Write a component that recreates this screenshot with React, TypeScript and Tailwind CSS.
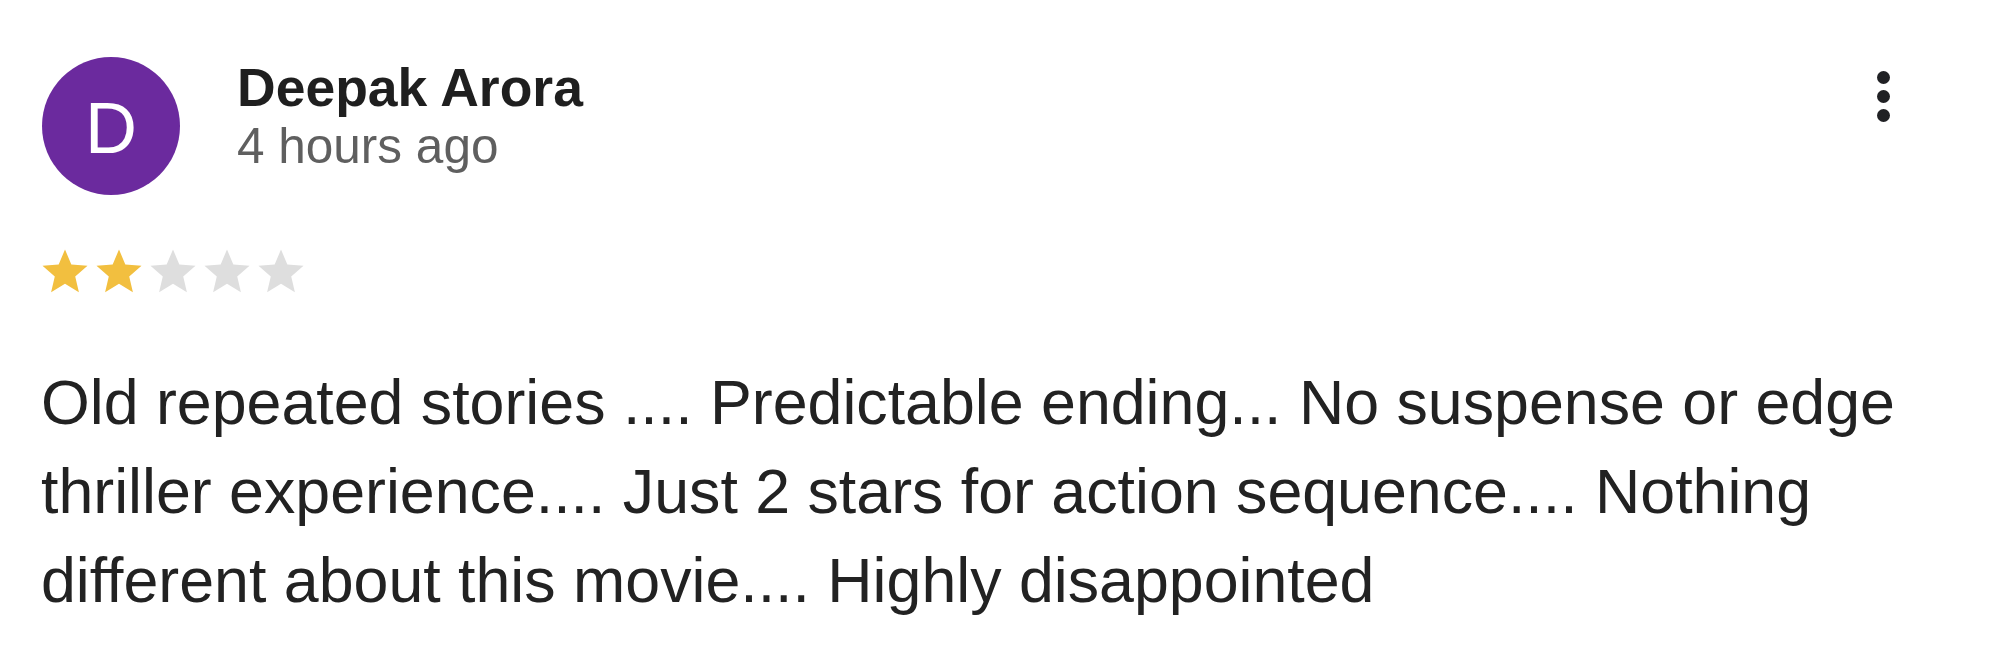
import React from 'react';

/**
 * ReviewCard - single user review, large scale
 */
const Star: React.FC<{ filled: boolean }> = ({ filled }) => (
  <svg className="w-[54px] h-[54px]" viewBox="0 0 24 24" fill={filled ? '#f2bf3f' : '#dedede'}>
    <path d="M12 17.27L18.18 21l-1.64-7.03L22 9.24l-7.19-.61L12 2 9.19 8.63 2 9.24l5.46 4.73L5.82 21z" />
  </svg>
);

const App: React.FC = () => {
  const rating = 2;

  return (
    <div className="w-[2000px] h-[659px] bg-white overflow-hidden font-['Liberation_Sans',Arial,sans-serif]">
      {/* Header */}
      <div className="flex items-start pl-[42px] pt-[57px] pr-[110px]">
        <div className="w-[138px] h-[138px] rounded-full bg-[#6b2a9e] flex items-center justify-center shrink-0">
          <span className="text-white text-[72px] leading-none font-['Liberation_Sans',sans-serif] pt-[4px]">D</span>
        </div>

        <div className="ml-[57px] mt-[1px] flex flex-col">
          <span className="text-[53.5px] leading-[60px] font-bold text-[#1f1f1f]">Deepak Arora</span>
          <span className="text-[49.5px] leading-[56px] text-[#5f5f5f]">4 hours ago</span>
        </div>

        {/* Menu */}
        <button className="ml-auto mt-[14px] flex flex-col gap-[6px] p-0" aria-label="More options">
          <span className="w-[13px] h-[13px] rounded-full bg-[#202124]" />
          <span className="w-[13px] h-[13px] rounded-full bg-[#202124]" />
          <span className="w-[13px] h-[13px] rounded-full bg-[#202124]" />
        </button>
      </div>

      {/* Rating */}
      <div className="flex pl-[38px] mt-[50px]">
        {[1, 2, 3, 4, 5].map((i) => (
          <Star key={i} filled={i <= rating} />
        ))}
      </div>

      {/* Body */}
      <p className="pl-[41px] pr-[40px] mt-[59px] text-[62.7px] leading-[89px] text-[#222222]">
        Old repeated stories .... Predictable ending... No suspense or edge thriller experience.... Just 2 stars for
        action sequence.... Nothing different about this movie.... Highly disappointed
      </p>
    </div>
  );
};

export default App;
